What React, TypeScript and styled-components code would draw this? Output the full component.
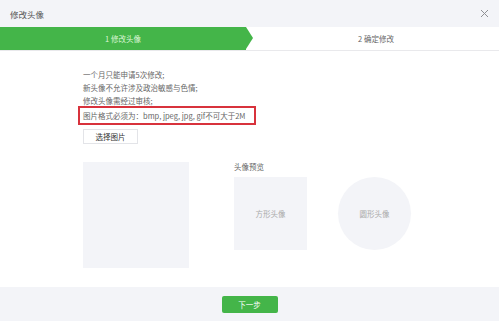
import React from "react";
import styled, { createGlobalStyle } from "styled-components";

const Global = createGlobalStyle`
  html, body { margin: 0; padding: 0; background: #fff; }
  body { font-family: "Noto Sans CJK SC", "Noto Sans", "Liberation Sans", sans-serif; }
`;

const Dialog = styled.div`
  width: 499px;
  height: 321px;
  display: flex;
  flex-direction: column;
  background: #fff;
  overflow: hidden;
`;

const TitleBar = styled.div`
  height: 27px;
  flex: none;
  display: flex;
  align-items: center;
  justify-content: space-between;
  padding: 0 10px;
  background: #f3f4f8;
  box-sizing: border-box;
`;

const Title = styled.span`
  font-size: 8.5px;
  color: #555;
`;

const Close = styled.button`
  border: 0;
  background: none;
  padding: 0;
  width: 9px;
  height: 9px;
  display: flex;
  cursor: pointer;
`;

const Steps = styled.div`
  height: 24px;
  flex: none;
  display: flex;
  border-bottom: 1px solid #e9e9ec;
  box-sizing: border-box;
`;

const Step = styled.div<{ $active?: boolean }>`
  position: relative;
  flex: 1;
  display: flex;
  align-items: center;
  justify-content: center;
  font-size: 7.5px;
  height: 23px;
  color: ${(p) => (p.$active ? "#def6d8" : "#666")};
  background: ${(p) => (p.$active ? "#44b549" : "#fff")};
  margin-right: ${(p) => (p.$active ? "7px" : "0")};
  &::after {
    content: "";
    display: ${(p) => (p.$active ? "block" : "none")};
    position: absolute;
    top: 0;
    right: -7px;
    border-top: 11.5px solid transparent;
    border-bottom: 11.5px solid transparent;
    border-left: 7px solid #44b549;
  }
`;

const Content = styled.div`
  flex: 1;
  padding: 17px 0 0 83px;
  display: flex;
  flex-direction: column;
  align-items: flex-start;
`;

const Line = styled.div`
  font-size: 7.5px;
  line-height: 13px;
  color: #666;
  white-space: nowrap;
`;

const Warn = styled.div`
  font-size: 7.5px;
  line-height: 15px;
  color: #666;
  white-space: nowrap;
  border: 2px solid #d8323c;
  margin: -1px 0 0 -5px;
  padding: 0 9px 0 3px;
`;

const PickButton = styled.button`
  margin-top: 4px;
  width: 55px;
  height: 15px;
  padding: 0;
  border: 1px solid #e3e4e8;
  background: #fff;
  font-family: inherit;
  font-size: 7.5px;
  color: #333;
  cursor: pointer;
`;

const Row = styled.div`
  margin-top: 18px;
  display: flex;
  gap: 45px;
`;

const Source = styled.div`
  width: 106px;
  height: 106px;
  background: #f3f4f8;
`;

const Preview = styled.div`
  display: flex;
  flex-direction: column;
`;

const Label = styled.div`
  font-size: 7.5px;
  line-height: 10px;
  color: #666;
  margin-bottom: 5px;
`;

const Thumbs = styled.div`
  display: flex;
  gap: 31px;
`;

const Thumb = styled.div<{ $round?: boolean }>`
  width: 73px;
  height: 73px;
  background: #f3f4f8;
  border-radius: ${(p) => (p.$round ? "50%" : "0")};
  display: flex;
  align-items: center;
  justify-content: center;
  font-size: 7.5px;
  color: #aaa;
`;

const Footer = styled.div`
  height: 34px;
  flex: none;
  background: #f3f4f8;
  display: flex;
  align-items: center;
  justify-content: center;
`;

const NextButton = styled.button`
  width: 56px;
  height: 17px;
  padding: 0;
  border: 0;
  border-radius: 2px;
  background: #44b549;
  color: #fff;
  font-family: inherit;
  font-size: 7.5px;
  cursor: pointer;
`;

export default function App() {
  return (
    <>
      <Global />
      <Dialog>
        <TitleBar>
          <Title>修改头像</Title>
          <Close aria-label="关闭">
            <svg width="9" height="9" viewBox="0 0 9 9">
              <path d="M1 1L8 8M8 1L1 8" stroke="#8f9094" strokeWidth="1" />
            </svg>
          </Close>
        </TitleBar>
        <Steps>
          <Step $active>1 修改头像</Step>
          <Step>2 确定修改</Step>
        </Steps>
        <Content>
          <Line>一个月只能申请5次修改;</Line>
          <Line>新头像不允许涉及政治敏感与色情;</Line>
          <Line>修改头像需经过审核;</Line>
          <Warn>图片格式必须为：bmp, jpeg, jpg, gif不可大于2M</Warn>
          <PickButton>选择图片</PickButton>
          <Row>
            <Source />
            <Preview>
              <Label>头像预览</Label>
              <Thumbs>
                <Thumb>方形头像</Thumb>
                <Thumb $round>圆形头像</Thumb>
              </Thumbs>
            </Preview>
          </Row>
        </Content>
        <Footer>
          <NextButton>下一步</NextButton>
        </Footer>
      </Dialog>
    </>
  );
}
